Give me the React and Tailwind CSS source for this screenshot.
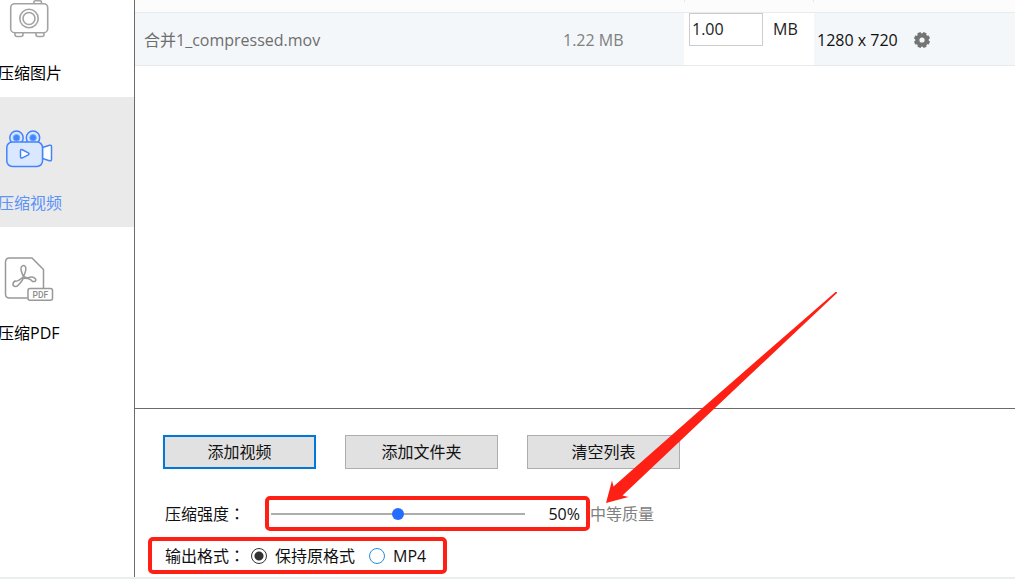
import { useState } from "react";

function ImageIcon() {
  return (
    <svg viewBox="0 0 52 44" className="h-11 w-13" fill="none" stroke="#a3a3a3" strokeWidth="1.6" aria-hidden="true">
      <path d="M30 6.500V5q0-1.200 1.200-1.200h5q1.200 0 1.200 1.200V6.500" />
      <rect x="6.700" y="6.700" width="37" height="29" rx="4" />
      <circle cx="25" cy="21.500" r="9.200" />
      <circle cx="25" cy="21.500" r="6" />
      <path d="M11 36v1.500q0 2 2 2h4q2 0 2-2v-1.500M32 36v1.500q0 2 2 2h4q2 0 2-2v-1.500" />
    </svg>
  );
}

function VideoIcon() {
  return (
    <svg viewBox="0 0 52 44" className="h-11 w-13" fill="#d9e8ff" stroke="#4383fb" strokeWidth="1.500" aria-hidden="true">
      <circle cx="12.500" cy="10.800" r="6.700" />
      <circle cx="29" cy="10.800" r="6.700" />
      <circle cx="12.500" cy="10.800" r="3.300" fill="#3f86ff" stroke="#78a9fc" strokeWidth="1" />
      <circle cx="29" cy="10.800" r="3.300" fill="#3f86ff" stroke="#78a9fc" strokeWidth="1" />
      <path d="M38.500 20.500l7-2.300q2-.4 2 1.500v12.600q0 1.900-2 1.500l-7-2.300z" fill="#fff" />
      <rect x="2.800" y="15" width="35.700" height="24.500" rx="5.500" />
      <path d="M16.500 24q0-2 1.800-1.200l6 3q1.500 1 0 2l-6 3q-1.800.8-1.800-1.200z" fill="#fff" />
    </svg>
  );
}

function PdfIcon() {
  return (
    <svg viewBox="0 0 52 44" className="h-11 w-13" fill="none" stroke="#999" strokeWidth="1.500" aria-hidden="true">
      <path d="M23.500 41H5.500q-4 0-4-4V5q0-4 4-4h22.500L39.500 12.500V31.500" />
      <path d="M19.500 19.500q-3.500-7-2.200-9.500 2.300-2.800 4.300 0 1 3-2.100 9.500M19.500 19.500q-5.500 5.500-8.500 4.500-2.300 1.500-2 4.200 2.500 2.700 5.200 0 4-4 4.800-6.700 6.500-1 9.500 3 4 .6 3.200-2.500-3-3.200-8-1-2.500-.5-4.200-1.500" />
      <rect x="24" y="31.500" width="24.500" height="11.700" rx="2" fill="#fff" />
      <text x="36.300" y="40.500" textAnchor="middle" fontFamily="Roboto, sans-serif" fontSize="8.500" fontWeight="500" fill="#8c8c8c" stroke="none">
        PDF
      </text>
    </svg>
  );
}

function GearIcon() {
  const teeth = [0, 45, 90, 135, 180, 225, 270, 315];
  return (
    <svg viewBox="0 0 16 16" className="size-4" fill="#747474" aria-hidden="true">
      <circle cx="8" cy="8" r="4.600" fill="none" stroke="#747474" strokeWidth="4" />
      {teeth.map((angle) => (
        <path key={angle} d="M5.800 2.500L6.400 0h3.200L10.200 2.500z" transform={`rotate(${angle + 22} 8 8)`} />
      ))}
    </svg>
  );
}

const tools = [
  { label: "压缩图片", Icon: ImageIcon },
  { label: "压缩视频", Icon: VideoIcon, active: true },
  { label: "压缩PDF", Icon: PdfIcon },
];

function Sidebar() {
  return (
    <nav className="w-[135px] shrink-0 overflow-hidden border-r border-[#6b6b6b]">
      <ul className="-mt-[33px]">
        {tools.map(({ label, Icon, active }) => (
          <li key={label}>
            <button
              type="button"
              className={
                active
                  ? "flex h-[130px] w-full flex-col items-start gap-[22px] bg-[#eaeaea] pt-[30px] text-[#5b93f8]"
                  : "flex h-[130px] w-full flex-col items-start gap-[22px] pt-[30px] text-black"
              }
            >
              <span className="pl-1">
                <Icon />
              </span>
              <span className="-ml-0.5 leading-5">{label}</span>
            </button>
          </li>
        ))}
      </ul>
    </nav>
  );
}

function FileTable() {
  return (
    <table className="w-full table-fixed border-collapse text-left">
      <colgroup>
        <col className="w-[413px]" />
        <col className="w-[136px]" />
        <col className="w-[130px]" />
        <col />
      </colgroup>
      <thead>
        <tr className="h-3 border-b border-[#e6ebee] bg-[#fcfcfc] align-top">
          <th className="p-0" />
          <th className="p-0" />
          <th className="p-0">
            <div className="h-0.5 border-x border-[#e6e6e6]" />
          </th>
          <th className="p-0" />
        </tr>
      </thead>
      <tbody>
        <tr className="h-[53px] border-b border-[#e6ebee] bg-[#f3f7fa]">
          <td className="p-0 pt-0.5 pl-[9px] text-[#6e6e6e]">合并1_compressed.mov</td>
          <td className="p-0 pt-0.5 pl-[15px] text-[#808080]">1.22 MB</td>
          <td className="bg-white p-0 align-top">
            <label className="flex items-center gap-2.5 pl-[5px] text-[#222]">
              <input
                type="text"
                defaultValue="1.00"
                className="h-[33px] w-[74px] border border-[#cccccc] bg-white px-0.5 outline-none"
              />
              MB
            </label>
          </td>
          <td className="p-0 pt-0.5 pl-[3px]">
            <div className="flex items-center gap-4 text-[#111]">
              1280 x 720
              <button type="button" aria-label="设置">
                <GearIcon />
              </button>
            </div>
          </td>
        </tr>
      </tbody>
    </table>
  );
}

function Colon() {
  return <span className="font-['Noto_Sans_CJK_JP',sans-serif]">：</span>;
}

function Controls() {
  const [strength, setStrength] = useState(50);
  return (
    <section className="border-t border-[#6b6b6b] pt-[26px] pb-[3px] text-[#111]">
      <div className="flex gap-[29px] pl-7">
        <button type="button" className="h-[34px] w-[153px] border-2 border-[#0078d7] bg-[#e1e1e1]">
          添加视频
        </button>
        <button type="button" className="h-[34px] w-[153px] border border-[#adadad] bg-[#e1e1e1]">
          添加文件夹
        </button>
        <button type="button" className="h-[34px] w-[153px] border border-[#adadad] bg-[#e1e1e1]">
          清空列表
        </button>
      </div>

      <div className="mt-[27px] flex items-center pl-[30px]">
        <label htmlFor="strength" className="w-[100px]">
          压缩强度
          <Colon />
        </label>
        <div className="flex h-[35px] w-[325px] items-center justify-between rounded-[5px] border-4 border-[#ff2015] pr-1.5 pl-0.5">
          <input
            id="strength"
            type="range"
            min="0"
            max="100"
            value={strength}
            onChange={(e) => setStrength(Number(e.target.value))}
            className="h-4 w-[254px] appearance-none bg-transparent [&::-webkit-slider-runnable-track]:h-0.5 [&::-webkit-slider-runnable-track]:bg-[#adadad] [&::-webkit-slider-thumb]:-mt-[5px] [&::-webkit-slider-thumb]:size-3 [&::-webkit-slider-thumb]:appearance-none [&::-webkit-slider-thumb]:rounded-full [&::-webkit-slider-thumb]:bg-[#256dff]"
          />
          <output htmlFor="strength">{strength}%</output>
        </div>
        <span className="text-[#808080]">中等质量</span>
      </div>

      <div
        role="radiogroup"
        aria-labelledby="format-label"
        className="mt-1.5 ml-[13px] flex h-[37px] w-[299px] items-center rounded-[5px] border-4 border-[#ff2015] pl-[13px]"
      >
        <span id="format-label" className="w-[86px]">
          输出格式
          <Colon />
        </span>
        <label className="flex items-center gap-2">
          <input
            type="radio"
            name="format"
            defaultChecked
            className="size-4 appearance-none rounded-full border border-[#2a8ddd] bg-white checked:border-[#333333] checked:bg-[radial-gradient(circle,#333333_4px,white_5px)]"
          />
          保持原格式
        </label>
        <label className="ml-3.5 flex items-center gap-2">
          <input
            type="radio"
            name="format"
            className="size-4 appearance-none rounded-full border border-[#2a8ddd] bg-white checked:border-[#333333] checked:bg-[radial-gradient(circle,#333333_4px,white_5px)]"
          />
          MP4
        </label>
      </div>
    </section>
  );
}

export default function App() {
  return (
    <div className="relative flex min-h-screen flex-col overflow-hidden bg-white font-['Open_Sans','Noto_Sans_CJK_SC',sans-serif] text-base leading-5">
      <div className="flex flex-1">
        <Sidebar />
        <main className="flex min-w-0 flex-1 flex-col">
          <div className="flex-1">
            <FileTable />
          </div>
          <Controls />
        </main>
      </div>
      <div className="h-0.5 bg-[#e9eeee]" />
      <svg
        viewBox="0 0 232 212"
        className="pointer-events-none absolute bottom-[76px] left-[606px] h-[212px] w-[232px]"
        fill="#ff2015"
        aria-hidden="true"
      >
        <path d="M0 212L6 189.500L7.500 195.500L97 116.500L229.500 1Q231.500 .5 231 2L109 117L16.500 204.500L22.500 206z" />
      </svg>
    </div>
  );
}
